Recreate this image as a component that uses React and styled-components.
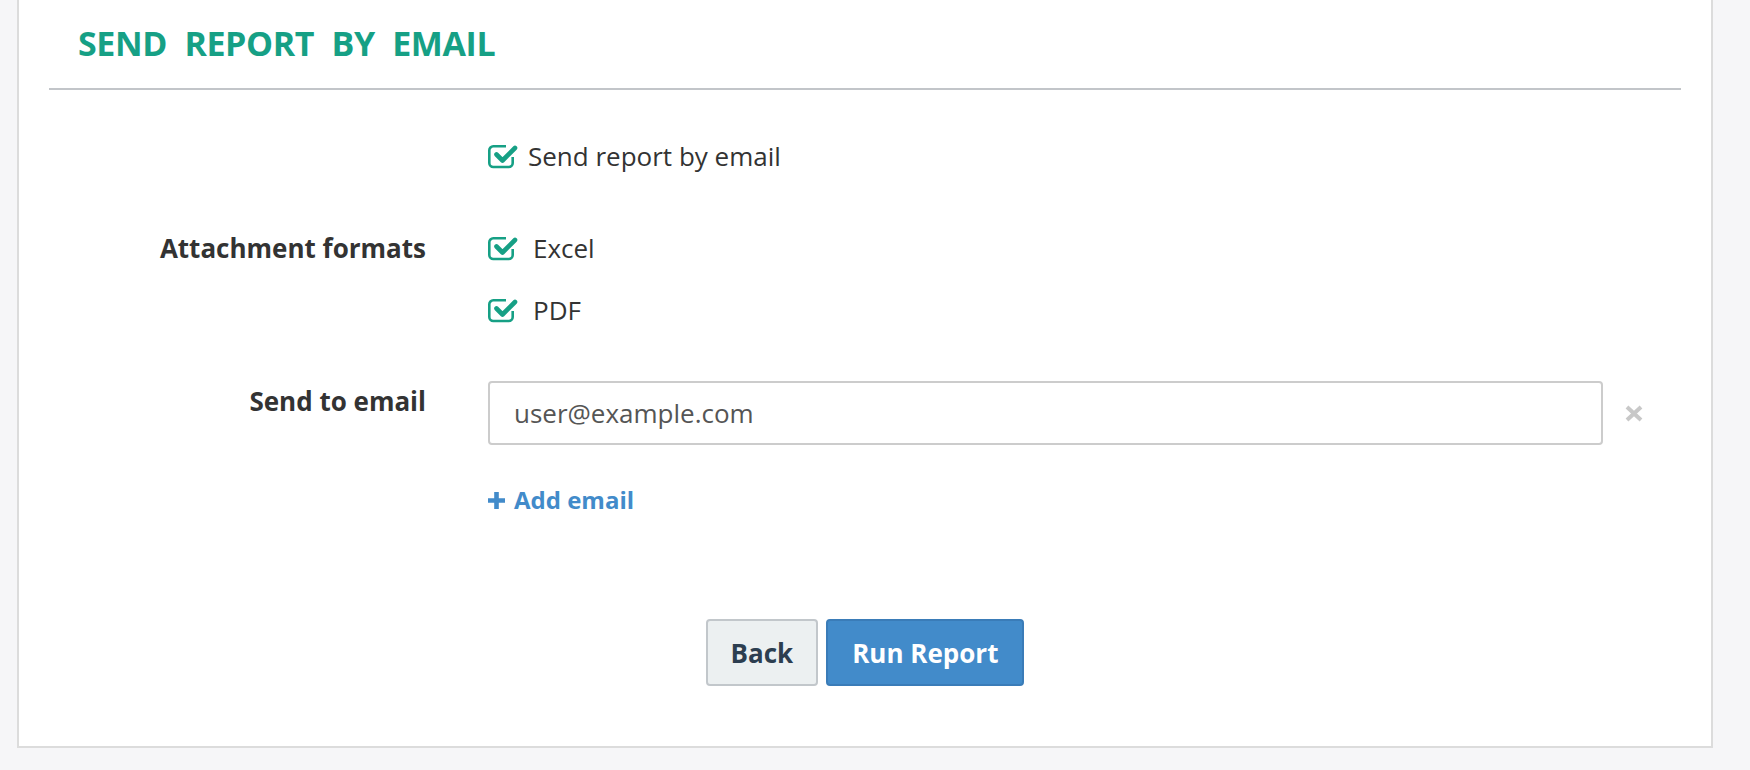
import styled, { createGlobalStyle } from "styled-components";

const GlobalStyle = createGlobalStyle`
  body {
    margin: 0;
    background: #f6f6f8;
    font-family: "Open Sans", "DejaVu Sans", sans-serif;
    color: #333333;
  }
`;

const Panel = styled.div`
  box-sizing: border-box;
  width: 1696px;
  margin-left: 17px;
  padding: 0 30px 60px;
  background: #ffffff;
  border: 2px solid #dcdcdc;
  border-top: none;
`;

const Header = styled.div`
  padding: 23px 0 25px 29px;
  border-bottom: 2px solid #c2c5c9;
`;

const Title = styled.h2`
  margin: 0;
  font-size: 34px;
  line-height: 40px;
  font-weight: 700;
  color: #16a085;
  letter-spacing: -0.4px;
  word-spacing: 9px;
`;

const Form = styled.div`
  padding-top: 49px;
`;

const Row = styled.div`
  display: grid;
  grid-template-columns: 377px 1fr;
  column-gap: 62px;
  align-items: start;
  margin-top: ${(p) => p.$top || 0}px;
`;

const Label = styled.div`
  text-align: right;
  font-size: 26px;
  line-height: 34px;
  font-weight: 700;
  color: #333333;
  padding-top: ${(p) => p.$pad || 0}px;
`;

const CheckList = styled.div`
  display: flex;
  flex-direction: column;
  gap: 28px;
`;

const CheckItem = styled.label`
  display: flex;
  align-items: center;
  gap: ${(p) => p.$gap || 10}px;
  font-size: 26px;
  line-height: 34px;
  color: #333333;
`;

const EmailField = styled.div`
  display: flex;
  flex-direction: column;
  align-items: flex-start;
`;

const InputRow = styled.div`
  display: flex;
  align-items: center;
  gap: 22px;
`;

const EmailInput = styled.input`
  box-sizing: border-box;
  width: 1115px;
  height: 64px;
  padding: 0 24px;
  border: 2px solid #cccccc;
  border-radius: 4px;
  font-family: inherit;
  font-size: 26px;
  color: #555555;
  outline: none;
`;

const RemoveButton = styled.button`
  display: flex;
  padding: 0;
  border: none;
  background: none;
  cursor: pointer;
`;

const AddLink = styled.a`
  display: inline-flex;
  align-items: center;
  gap: 9px;
  margin-top: 38px;
  font-size: 24px;
  line-height: 34px;
  font-weight: 700;
  color: #428bca;
  text-decoration: none;
`;

const Actions = styled.div`
  display: flex;
  justify-content: center;
  gap: 8px;
  margin-top: 102px;
`;

const Button = styled.button`
  box-sizing: border-box;
  height: 67px;
  padding: 0 ${(p) => (p.$primary ? 24 : 23)}px;
  border: 2px solid ${(p) => (p.$primary ? "#3a7cb8" : "#c2c7cb")};
  border-radius: 4px;
  background: ${(p) => (p.$primary ? "#428bca" : "#ecf0f1")};
  color: ${(p) => (p.$primary ? "#ffffff" : "#2c3e50")};
  font-family: inherit;
  font-size: 26px;
  font-weight: 700;
  cursor: pointer;
`;

const CheckIcon = () => (
  <svg width="30" height="25" viewBox="0 0 30 25" fill="none">
    <path
      d="M18 2.3 H5.3 A4 4 0 0 0 1.3 6.3 V19 A4 4 0 0 0 5.3 23 H20.7 A4 4 0 0 0 24.7 19 V13"
      stroke="#16a085"
      strokeWidth="2.6"
    />
    <path
      d="M8.5 10.5 L14.5 16.5 L27 4"
      stroke="#16a085"
      strokeWidth="4.6"
      strokeLinecap="round"
      strokeLinejoin="round"
    />
  </svg>
);

const Check = ({ children, gap }) => (
  <CheckItem $gap={gap}>
    <CheckIcon />
    <span>{children}</span>
  </CheckItem>
);

const App = () => {
  return (
    <>
      <GlobalStyle />
      <Panel>
        <Header>
          <Title>SEND REPORT BY EMAIL</Title>
        </Header>
        <Form>
          <Row>
            <Label />
            <Check>Send report by email</Check>
          </Row>
          <Row $top={58}>
            <Label>Attachment formats</Label>
            <CheckList>
              <Check gap={15}>Excel</Check>
              <Check gap={15}>PDF</Check>
            </CheckList>
          </Row>
          <Row $top={54}>
            <Label $pad={3}>Send to email</Label>
            <EmailField>
              <InputRow>
                <EmailInput defaultValue="user@example.com" />
                <RemoveButton aria-label="Remove">
                  <svg width="18" height="17" viewBox="0 0 18 17">
                    <path
                      d="M2 2 L16 15 M16 2 L2 15"
                      stroke="#c8c8c8"
                      strokeWidth="4"
                    />
                  </svg>
                </RemoveButton>
              </InputRow>
              <AddLink href="#">
                <svg width="17" height="17" viewBox="0 0 17 17">
                  <path d="M8.5 0 V17 M0 8.5 H17" stroke="#428bca" strokeWidth="4.6" />
                </svg>
                Add email
              </AddLink>
            </EmailField>
          </Row>
        </Form>
        <Actions>
          <Button>Back</Button>
          <Button $primary>Run Report</Button>
        </Actions>
      </Panel>
    </>
  );
};

export default App;
